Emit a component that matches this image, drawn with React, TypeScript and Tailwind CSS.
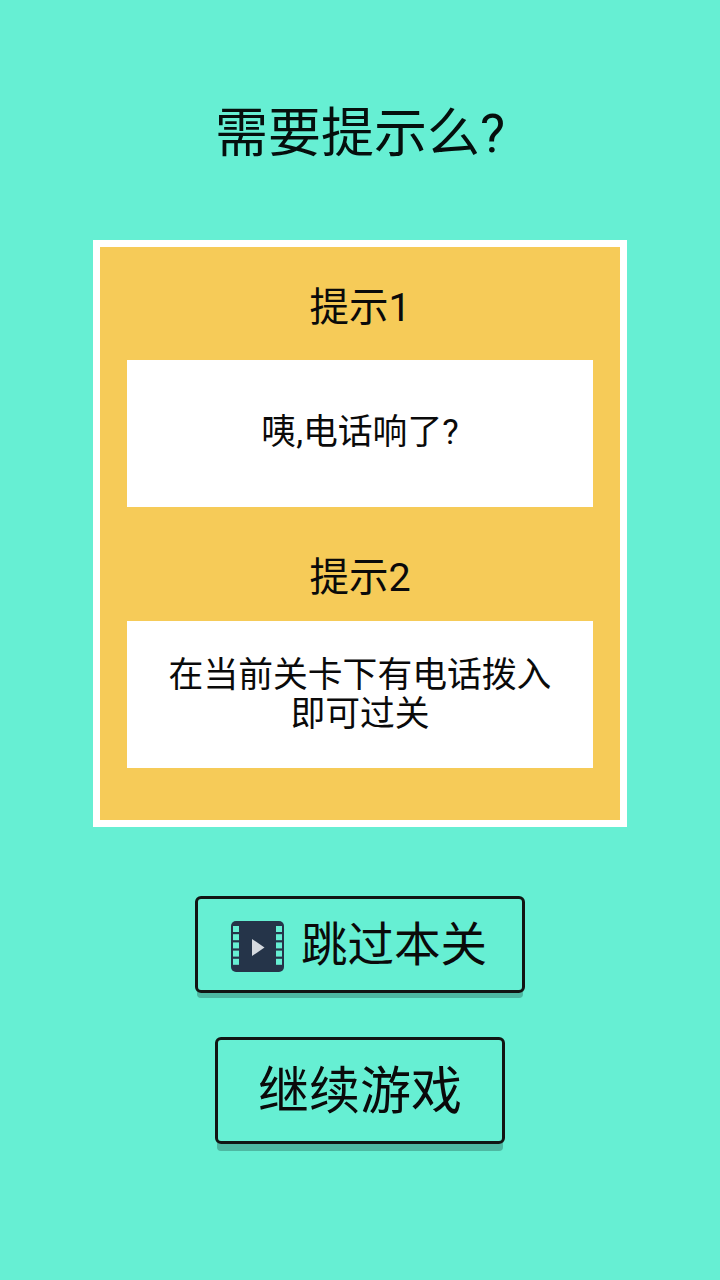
const font = { fontFamily: 'Roboto, "Noto Sans CJK SC", sans-serif' };

function FilmIcon() {
  const holes = [0, 1, 2, 3, 4];
  return (
    <svg width="53" height="51" viewBox="0 0 53 51" className="mt-[2px] shrink-0">
      <rect x="0" y="0" width="53" height="51" rx="5" fill="#253449" />
      {holes.map((i) => (
        <g key={i}>
          <rect x="2" y={5 + i * 8.2} width="6" height="6" fill="#66EFD3" />
          <rect x="45" y={5 + i * 8.2} width="6" height="6" fill="#66EFD3" />
        </g>
      ))}
      <path d="M21 18 L33.5 26.5 L21 35 Z" fill="#D5D9DF" />
    </svg>
  );
}

function Hint({ title, children, head, body }: { title: string; children: React.ReactNode; head: string; body: string }) {
  return (
    <div className="flex flex-col">
      <div className={`flex items-center justify-center text-[39.5px] leading-none text-[#0a0a0a] ${head}`}>{title}</div>
      <div className={`flex h-[147px] items-center justify-center bg-white px-4 text-center text-[34.8px] leading-[39px] text-[#0a0a0a] ${body}`}>
        {children}
      </div>
    </div>
  );
}

export default function App() {
  return (
    <div className="flex h-[1280px] w-[720px] flex-col items-center overflow-hidden bg-[#66EFD3]" style={font}>
      <h1 className="mt-[102px] h-[138px] text-[53px] leading-[64px] font-normal text-[#050f0d]">需要提示么?</h1>
      <div className="flex h-[587px] w-[534px] flex-col border-[7px] border-white bg-[#F6CB58] px-[27px]">
        <Hint title="提示1" head="h-[113px] pt-[8px]" body="pb-[3px]">咦,电话响了?</Hint>
        <Hint title="提示2" head="h-[114px] pt-[28px]" body="">
          <span>在当前关卡下有电话拨入<br />即可过关</span>
        </Hint>
      </div>
      <button className="mt-[69px] flex h-[97px] w-[330px] items-center justify-center gap-[17px] rounded-[6px] border-[3px] border-[#111513] pt-[2px] pr-[2px] text-[46.5px] leading-none text-[#0a0a0a] shadow-[0_7px_0_-2px_#4DB8A2]">
        <FilmIcon />
        <span>跳过本关</span>
      </button>
      <button className="mt-[44px] flex h-[107px] w-[290px] items-center justify-center rounded-[6px] border-[3px] border-[#111513] pt-[2px] text-[51px] leading-none text-[#0a0a0a] shadow-[0_9px_0_-2px_#4DB8A2]">
        继续游戏
      </button>
    </div>
  );
}
